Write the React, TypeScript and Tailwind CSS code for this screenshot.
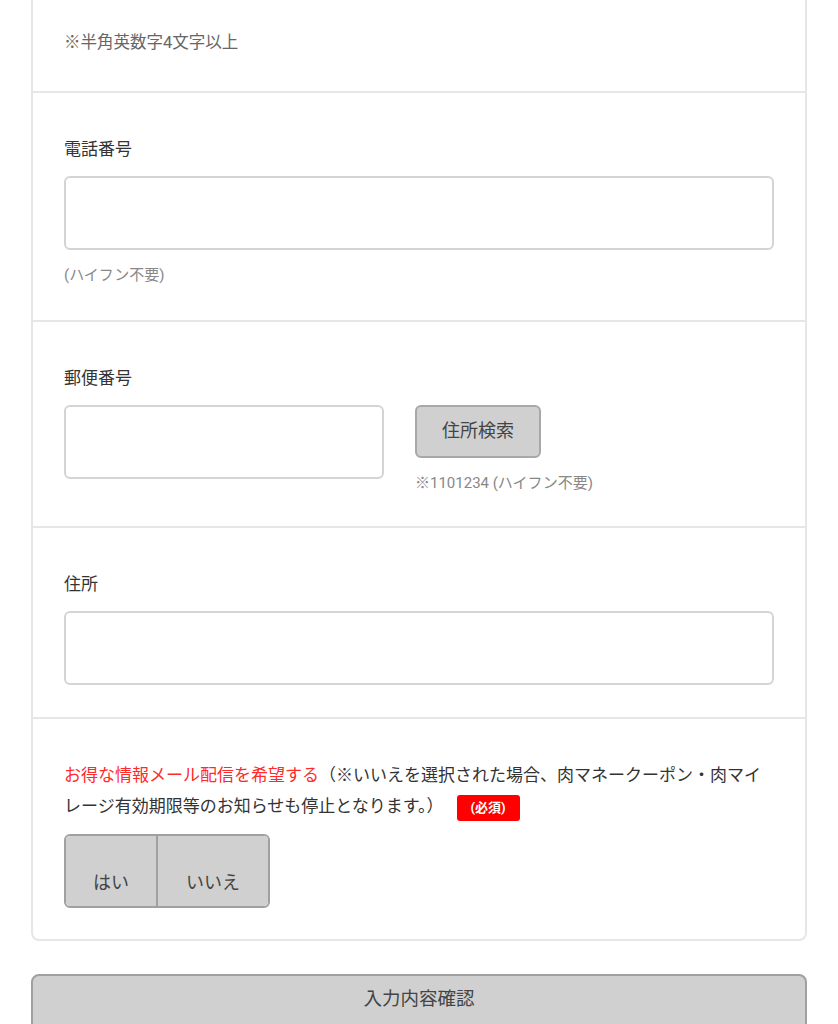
import React, { useState } from "react";

const font = "font-['Roboto','Noto_Sans_CJK_JP',sans-serif]";

type FieldProps = {
  label: string;
  hint?: string;
  className?: string;
};

function TextField({ label, hint, className }: FieldProps) {
  return (
    <div className={`border-b-2 border-[#e6e6e6] px-[31px] ${className ?? ""}`}>
      <div className="text-[17px] leading-[22px] text-[#333]">{label}</div>
      <input
        type="text"
        className="mt-[16px] block h-[74px] w-full rounded-[6px] border-2 border-[#d4d4d4] bg-white outline-none"
      />
      {hint && <div className="mt-[14px] text-[15px] leading-[22px] text-[#888]">{hint}</div>}
    </div>
  );
}

export default function App() {
  const [mail, setMail] = useState<"yes" | "no" | null>(null);

  return (
    <div className={`min-h-[1024px] overflow-hidden bg-white ${font}`}>
      <div className="mx-[31px] rounded-b-[8px] border-x-2 border-b-2 border-[#e6e6e6]">
        {/* password note (top cut off) */}
        <div className="border-b-2 border-[#e6e6e6] px-[31px] pt-[32px] pb-[37px]">
          <div className="text-[16.5px] leading-[22px] text-[#666]">※半角英数字4文字以上</div>
        </div>

        <TextField label="電話番号" hint="(ハイフン不要)" className="pt-[45px] pb-[34px]" />

        {/* postal code */}
        <div className="border-b-2 border-[#e6e6e6] px-[31px] pt-[45px] pb-[32px]">
          <div className="text-[17px] leading-[22px] text-[#333]">郵便番号</div>
          <div className="mt-[16px] flex gap-[31px]">
            <input
              type="text"
              className="block h-[74px] w-[320px] rounded-[6px] border-2 border-[#d4d4d4] bg-white outline-none"
            />
            <div>
              <button className="h-[53px] w-[126px] rounded-[6px] border-2 border-[#a8a8a8] bg-[#d0d0d0] pb-[2px] text-[18px] text-[#444]">
                住所検索
              </button>
              <div className="mt-[14px] text-[15px] leading-[22px] text-[#888]">※1101234 (ハイフン不要)</div>
            </div>
          </div>
        </div>

        <TextField label="住所" className="pt-[45px] pb-[32px]" />

        {/* mail magazine */}
        <div className="px-[31px] pt-[41px] pb-[31px]">
          <p className="text-[17px] leading-[31px] text-[#333]">
            <span className="text-[#ff2a2a]">お得な情報メール配信を希望する</span>
            （※いいえを選択された場合、肉マネークーポン・肉マイレージ有効期限等のお知らせも停止となります。）
            <span className="ml-[13px] inline-block h-[26px] w-[63px] rounded-[3px] bg-[#ff0000] text-center align-middle text-[13px] font-bold leading-[26px] text-white">
              (必須)
            </span>
          </p>
          <div className="mt-[12px] flex w-[206px] overflow-hidden rounded-[6px] border-2 border-[#a0a0a0]">
            <button
              onClick={() => setMail("yes")}
              className={`h-[70px] w-[92px] border-r-2 border-[#a0a0a0] pt-[22px] text-[18px] text-[#444] ${
                mail === "yes" ? "bg-[#bdbdbd]" : "bg-[#d0d0d0]"
              }`}
            >
              はい
            </button>
            <button
              onClick={() => setMail("no")}
              className={`h-[70px] flex-1 pt-[22px] text-[18px] text-[#444] ${
                mail === "no" ? "bg-[#bdbdbd]" : "bg-[#d0d0d0]"
              }`}
            >
              いいえ
            </button>
          </div>
        </div>
      </div>

      <div className="mx-[31px] mt-[33px]">
        <button className="h-[60px] w-full rounded-[8px] border-2 border-[#a0a0a0] bg-[#d0d0d0] pb-[8px] text-[18.5px] text-[#444]">
          入力内容確認
        </button>
      </div>
    </div>
  );
}
